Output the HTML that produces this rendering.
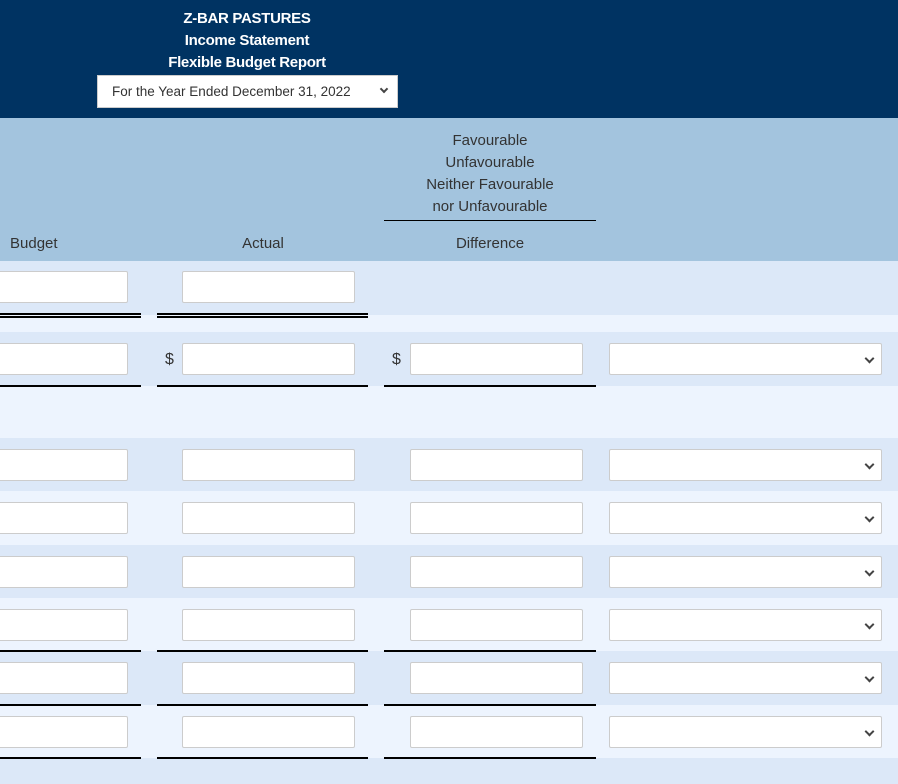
<!DOCTYPE html>
<html><head><style>
*{margin:0;padding:0;box-sizing:border-box}
body{width:898px;height:784px;position:relative;overflow:hidden;background:#dce8f8;font-family:"Liberation Sans",sans-serif;color:#333}
.a{position:absolute}
.hd{left:0;top:0;width:898px;height:118px;background:#003362}
.t{position:absolute;left:97px;width:300px;text-align:center;color:#fff;font-weight:bold;font-size:15px;letter-spacing:-0.3px}
.sel{left:97px;top:75px;width:301px;height:33px;background:#fff;border:1px solid #ccc;font-size:13.5px;padding:8px 0 0 14px;color:#333}
.ch{left:0;top:118px;width:898px;height:143px;background:#a3c4de}
.ht{position:absolute;font-size:15px;color:#333;text-align:center}
.r{position:absolute;left:0;width:898px}
.d{background:#dce8f8}.l{background:#edf4fe}
.in{position:absolute;height:32px;background:#fff;border:1px solid #ccc;border-radius:2px}
.ln{position:absolute;height:2px;background:#000}
.dl{position:absolute;height:5px;border-top:2px solid #000;border-bottom:2px solid #000}
.dol{position:absolute;font-size:16px;color:#333}
.chev{position:absolute;right:8px;top:11px;width:7px;height:7px;border-right:2px solid #444;border-bottom:2px solid #444;transform:rotate(45deg)}
</style></head><body>
<div class="a hd"></div>
<div class="t" style="top:10px">Z-BAR PASTURES</div>
<div class="t" style="top:32px">Income Statement</div>
<div class="t" style="top:54px">Flexible Budget Report</div>
<div class="a sel">For the Year Ended December 31, 2022<span class="chev" style="top:10px;right:10px;width:6px;height:6px"></span></div>
<div class="a ch"></div>
<div class="ht" style="left:384px;width:212px;top:130px;line-height:22px">Favourable<br>Unfavourable<br>Neither Favourable<br>nor Unfavourable</div>
<div class="ln" style="left:384px;width:212px;top:220px;height:1px"></div>
<div class="ht" style="left:10px;top:235px">Budget</div>
<div class="ht" style="left:177px;width:172px;top:235px">Actual</div>
<div class="ht" style="left:384px;width:212px;top:235px">Difference</div>

<div class="r d" style="top:261px;height:54px"></div>
<div class="r l" style="top:315px;height:17px"></div>
<div class="r d" style="top:332px;height:54px"></div>
<div class="r l" style="top:386px;height:52px"></div>
<div class="r d" style="top:438px;height:53px"></div>
<div class="r l" style="top:491px;height:54px"></div>
<div class="r d" style="top:545px;height:53px"></div>
<div class="r l" style="top:598px;height:53px"></div>
<div class="r d" style="top:651px;height:54px"></div>
<div class="r l" style="top:705px;height:53px"></div>
<div class="r d" style="top:758px;height:26px"></div>

<div class="in" style="left:-2px;width:130px;top:271px"></div>
<div class="in" style="left:182px;width:173px;top:271px"></div>
<div class="dl" style="left:0;width:141px;top:313px"></div>
<div class="dl" style="left:157px;width:211px;top:313px"></div>

<div class="in" style="left:-2px;width:130px;top:343px"></div>
<div class="dol" style="left:165px;top:351px">$</div>
<div class="in" style="left:182px;width:173px;top:343px"></div>
<div class="dol" style="left:392px;top:351px">$</div>
<div class="in" style="left:410px;width:173px;top:343px"></div>
<div class="in" style="left:609px;width:273px;top:343px"><span class="chev"></span></div>
<div class="ln" style="left:0;width:141px;top:385px"></div>
<div class="ln" style="left:157px;width:211px;top:385px"></div>
<div class="ln" style="left:384px;width:212px;top:385px"></div>

<div class="in" style="left:-2px;width:130px;top:449px"></div><div class="in" style="left:182px;width:173px;top:449px"></div><div class="in" style="left:410px;width:173px;top:449px"></div><div class="in" style="left:609px;width:273px;top:449px"><span class="chev"></span></div>
<div class="in" style="left:-2px;width:130px;top:502px"></div><div class="in" style="left:182px;width:173px;top:502px"></div><div class="in" style="left:410px;width:173px;top:502px"></div><div class="in" style="left:609px;width:273px;top:502px"><span class="chev"></span></div>
<div class="in" style="left:-2px;width:130px;top:556px"></div><div class="in" style="left:182px;width:173px;top:556px"></div><div class="in" style="left:410px;width:173px;top:556px"></div><div class="in" style="left:609px;width:273px;top:556px"><span class="chev"></span></div>
<div class="in" style="left:-2px;width:130px;top:609px"></div><div class="in" style="left:182px;width:173px;top:609px"></div><div class="in" style="left:410px;width:173px;top:609px"></div><div class="in" style="left:609px;width:273px;top:609px"><span class="chev"></span></div>
<div class="ln" style="left:0;width:141px;top:650px"></div><div class="ln" style="left:157px;width:211px;top:650px"></div><div class="ln" style="left:384px;width:212px;top:650px"></div>
<div class="in" style="left:-2px;width:130px;top:662px"></div><div class="in" style="left:182px;width:173px;top:662px"></div><div class="in" style="left:410px;width:173px;top:662px"></div><div class="in" style="left:609px;width:273px;top:662px"><span class="chev"></span></div>
<div class="ln" style="left:0;width:141px;top:704px"></div><div class="ln" style="left:157px;width:211px;top:704px"></div><div class="ln" style="left:384px;width:212px;top:704px"></div>
<div class="in" style="left:-2px;width:130px;top:716px"></div><div class="in" style="left:182px;width:173px;top:716px"></div><div class="in" style="left:410px;width:173px;top:716px"></div><div class="in" style="left:609px;width:273px;top:716px"><span class="chev"></span></div>
<div class="ln" style="left:0;width:141px;top:757px"></div><div class="ln" style="left:157px;width:211px;top:757px"></div><div class="ln" style="left:384px;width:212px;top:757px"></div>
</body></html>
